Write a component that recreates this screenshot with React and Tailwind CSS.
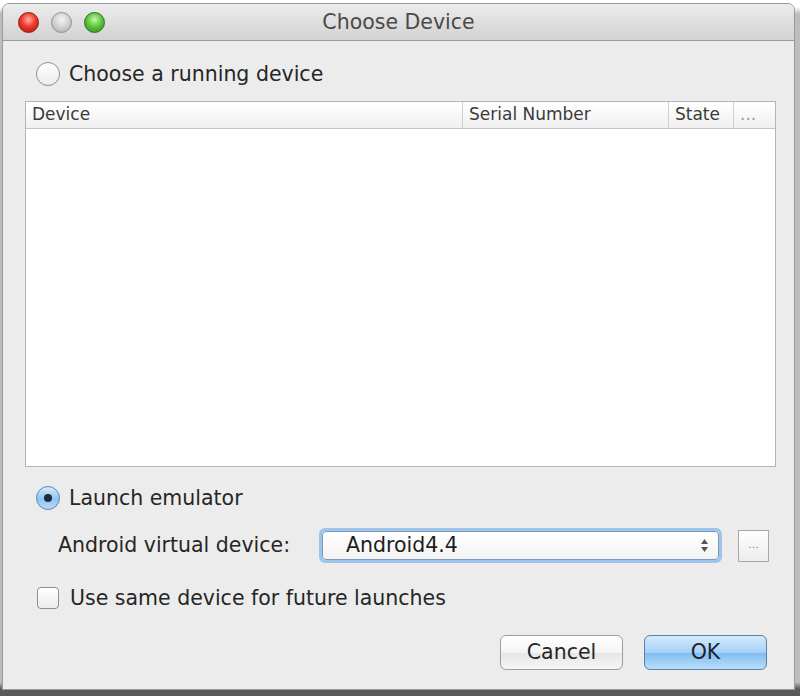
import React from 'react';

const font = { fontFamily: '"DejaVu Sans", "Liberation Sans", sans-serif' };

function Light({ color }) {
  const fills = {
    red: 'bg-[radial-gradient(circle_at_50%_35%,#ffb0a8_0%,#f0382c_45%,#a8120c_100%)] border-[#8a1a14]',
    gray: 'bg-[radial-gradient(circle_at_50%_35%,#f4f4f4_0%,#d0d0d0_50%,#a8a8a8_100%)] border-[#8f8f8f]',
    green: 'bg-[radial-gradient(circle_at_50%_35%,#c8f5b0_0%,#5cc83c_45%,#26861a_100%)] border-[#2a6e1e]',
  };
  return <div className={`w-[21px] h-[21px] rounded-full border ${fills[color]}`} />;
}

function Radio({ checked }) {
  if (checked) {
    return (
      <div className="w-[24px] h-[24px] rounded-full border border-[#5d86b8] bg-[linear-gradient(#d6ebfc,#8ec4f3_55%,#b8dcf8)] flex items-center justify-center shrink-0">
        <div className="w-[8px] h-[8px] rounded-full bg-[#1c2a3a]" />
      </div>
    );
  }
  return (
    <div className="w-[24px] h-[24px] rounded-full border border-[#8f8f8f] bg-[linear-gradient(#ffffff,#ececec)] shrink-0" />
  );
}

function HeaderCell({ children, className }) {
  return (
    <div className={`h-full flex items-center pl-[6px] border-r border-[#cfcfcf] text-[17px] text-[#3a3a3a] ${className}`}>
      {children}
    </div>
  );
}

export default function App() {
  return (
    <div className="w-[800px] h-[696px] bg-[linear-gradient(#ffffff_0%,#ffffff_1%,#bdbdbd_2%,#bdbdbd_98%,#5a5a5a_99%)] pt-[3px] px-[2px]" style={font}>
      <div className="w-[793px] h-[687px] rounded-t-[7px] border border-[#9a9a9a] bg-[#ececec] flex flex-col overflow-hidden">
        {/* title bar */}
        <div className="h-[37px] shrink-0 grid grid-cols-[1fr_auto_1fr] items-center border-b border-[#9b9b9b] bg-[linear-gradient(#ececec,#d2d2d2)]">
          <div className="flex items-center gap-[12px] pl-[15px]">
            <Light color="red" />
            <Light color="gray" />
            <Light color="green" />
          </div>
          <div className="text-[20.5px] text-[#4a4a4a]">Choose Device</div>
          <div />
        </div>

        {/* body */}
        <div className="flex-1 flex flex-col pl-[22px] pr-[18px]">
          <div className="mt-[21px] h-[24px] flex items-center gap-[9px] pl-[11px]">
            <Radio />
            <span className="text-[20.5px] text-[#262626]">Choose a running device</span>
          </div>

          <div className="mt-[15px] h-[366px] border border-[#b5b5b5] bg-white flex flex-col">
            <div className="h-[27px] border-b border-[#c4c4c4] bg-[linear-gradient(#ffffff,#f0f0f0)] grid grid-cols-[437px_206px_65px_1fr]">
              <HeaderCell>Device</HeaderCell>
              <HeaderCell>Serial Number</HeaderCell>
              <HeaderCell>State</HeaderCell>
              <HeaderCell className="border-r-0 text-[#9a9a9a] text-[14px]">...</HeaderCell>
            </div>
            <div className="flex-1" />
          </div>

          <div className="mt-[19px] h-[24px] flex items-center gap-[9px] pl-[11px]">
            <Radio checked />
            <span className="text-[20.5px] text-[#262626]">Launch emulator</span>
          </div>

          <div className="mt-[18px] h-[35px] flex items-center pl-[33px]">
            <span className="w-[261px] text-[20.5px] text-[#262626]">Android virtual device:</span>
            <div className="w-[403px] h-[35px] rounded-[6px] border-[3px] border-[#9cc4ec]">
              <div className="h-full rounded-[4px] border border-[#7e98b4] bg-[linear-gradient(#ffffff,#f3f3f3)] flex items-center justify-between pl-[23px] pr-[9px]">
                <span className="text-[20.5px] text-[#1e1e1e]">Android4.4</span>
                <svg width="9" height="15" viewBox="0 0 9 15">
                  <path d="M4.5 1 L8 6 L1 6 Z" fill="#555" />
                  <path d="M4.5 14 L8 9 L1 9 Z" fill="#555" />
                </svg>
              </div>
            </div>
            <div className="ml-[16px] w-[31px] h-[32px] border border-[#a8a8a8] bg-[linear-gradient(#ffffff,#ececec)] flex items-center justify-center text-[11px] text-[#8a8a8a]">
              ...
            </div>
          </div>

          <div className="mt-[24px] h-[22px] flex items-center gap-[11px] pl-[12px]">
            <div className="w-[22px] h-[22px] rounded-[4px] border border-[#8f8f8f] bg-[linear-gradient(#ffffff,#ececec)] shrink-0" />
            <span className="text-[20.5px] text-[#262626]">Use same device for future launches</span>
          </div>

          <div className="mt-[26px] flex justify-end gap-[21px] pr-[9px]">
            <button className="w-[123px] h-[35px] rounded-[6px] border border-[#9d9d9d] bg-[linear-gradient(#ffffff,#f4f4f4_50%,#e6e6e6_51%,#f6f6f6)] text-[20.5px] text-[#262626]">
              Cancel
            </button>
            <button className="w-[123px] h-[35px] rounded-[6px] border border-[#5d7fae] bg-[linear-gradient(#d4eafc,#a6d1f6_50%,#7fbcf0_51%,#b9dffa)] text-[20.5px] text-[#1b2430]">
              OK
            </button>
          </div>
        </div>
      </div>
    </div>
  );
}
